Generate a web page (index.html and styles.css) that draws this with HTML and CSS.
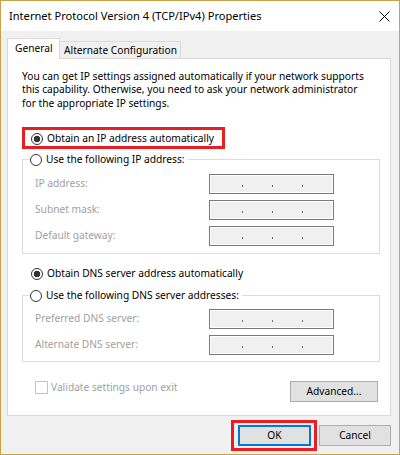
FILE: index.html
```html
<!DOCTYPE html>
<html lang="en">
<head>
<meta charset="utf-8">
<title>Internet Protocol Version 4 (TCP/IPv4) Properties</title>
<link rel="stylesheet" href="styles.css">
</head>
<body>
<div class="window">
  <div class="titlebar">
    <span class="title">Internet Protocol Version 4 (TCP/IPv4) Properties</span>
    <svg class="close" width="11" height="11" viewBox="0 0 11 11"><path d="M0.5 0.5L10.5 10.5M10.5 0.5L0.5 10.5" stroke="#000" stroke-width="1" fill="none"/></svg>
  </div>
  <div class="content">
    <div class="tabs">
      <div class="tab tab-active">General</div>
      <div class="tab tab-other">Alternate Configuration</div>
    </div>
    <div class="panel">
      <p class="intro">You can get IP settings assigned automatically if your network supports<br>this capability. Otherwise, you need to ask your network administrator<br>for the appropriate IP settings.</p>

      <div class="highlight">
        <span class="radio checked"></span><span>Obtain an IP address automatically</span>
      </div>

      <fieldset class="group group-ip">
        <legend class="option"><span class="radio"></span><span>Use the following IP address:</span></legend>
        <div class="field"><span class="label">IP address:</span><span class="ipbox"><i></i><i></i><i></i></span></div>
        <div class="field"><span class="label">Subnet mask:</span><span class="ipbox"><i></i><i></i><i></i></span></div>
        <div class="field"><span class="label">Default gateway:</span><span class="ipbox"><i></i><i></i><i></i></span></div>
      </fieldset>

      <div class="option option-row"><span class="radio checked"></span><span>Obtain DNS server address automatically</span></div>

      <fieldset class="group group-dns">
        <legend class="option"><span class="radio"></span><span>Use the following DNS server addresses:</span></legend>
        <div class="field"><span class="label">Preferred DNS server:</span><span class="ipbox"><i></i><i></i><i></i></span></div>
        <div class="field"><span class="label">Alternate DNS server:</span><span class="ipbox"><i></i><i></i><i></i></span></div>
      </fieldset>

      <div class="panel-footer">
        <div class="check"><span class="checkbox"></span><span>Validate settings upon exit</span></div>
        <div class="button button-advanced">Advanced...</div>
      </div>
    </div>
    <div class="footer">
      <div class="ok-highlight"><div class="button button-ok">OK</div></div>
      <div class="button button-cancel">Cancel</div>
    </div>
  </div>
</div>
</body>
</html>
```

FILE: styles.css
```css
* { box-sizing: border-box; }
html, body { margin: 0; padding: 0; }
body {
  font-family: "Noto Sans", "Segoe UI", sans-serif;
  font-size: 10.2px;
  line-height: 13px;
  color: #000;
  background: #fff;
}
.window {
  width: 400px;
  height: 455px;
  border: 1px solid #c8a245;
  background: #f0f0f0;
  display: flex;
  flex-direction: column;
  overflow: hidden;
}
.titlebar {
  height: 30px;
  flex: none;
  background: #fff;
  display: flex;
  align-items: center;
  justify-content: space-between;
  padding: 0 9px 0 8px;
}
.title { font-size: 11.1px; line-height: 16px; }
.close { display: block; }

.content { padding: 7px 8px 0 6px; }

.tabs { display: flex; align-items: flex-end; height: 20px; }
.tab {
  display: flex;
  align-items: center;
  border: 1px solid #d9d9d9;
  border-bottom: 0;
  white-space: nowrap;
}
.tab-active {
  height: 21px;
  width: 53px;
  margin-bottom: -1px;
  background: #fff;
  padding: 0 0 2px 7px;
  position: relative;
  z-index: 1;
}
.tab-other {
  height: 17px;
  width: 121px;
  border-left: 0;
  padding: 0 0 0 4px;
  background: #f0f0f0;
}

.panel {
  height: 358px;
  background: #fff;
  border: 1px solid #d9d9d9;
  padding-top: 11px;
}
.intro { margin: 0 0 0 14px; line-height: 13.3px; }

.radio {
  flex: none;
  width: 12px;
  height: 12px;
  border: 1px solid #333;
  border-radius: 50%;
  background: #fff;
}
.radio.checked { background: radial-gradient(circle, #333 0 3px, #fff 3.6px); }

.highlight {
  margin: 17px 0 0 14px;
  width: 203px;
  height: 22px;
  border: 3px solid #ec1c24;
  padding: 2px 0 0 6px;
  display: flex;
  align-items: center;
  gap: 4px;
  white-space: nowrap;
}

.option { display: flex; align-items: center; gap: 4px; height: 14px; white-space: nowrap; }

.group {
  width: 358px;
  margin: 4px 0 0 14px;
  border: 1px solid #dcdcdc;
  padding: 7px 0 7px 0;
  min-inline-size: 0;
}
.group legend { margin-left: 7px; padding: 0 3px 0 0; }
.group-dns { margin-top: 8px; padding: 6px 0 6px 0; }

.field {
  display: flex;
  align-items: center;
  height: 20px;
  margin-left: 12px;
}
.field + .field { margin-top: 6px; }
.label { width: 174px; color: #a0a0a0; }
.ipbox {
  width: 125px;
  height: 20px;
  border: 1px solid #7a7a7a;
  box-shadow: inset 0 0 0 1px #fff;
  background: #f0f0f0;
  display: flex;
  align-items: center;
  gap: 29px;
  padding: 5px 0 0 32px;
}
.ipbox i { display: block; width: 1px; height: 2px; background: #6e6a8e; }

.option-row { margin: 13px 0 0 23px; }

.panel-footer {
  margin: 19px 12px 0 27px;
  display: flex;
  justify-content: space-between;
  align-items: flex-start;
}
.check { display: flex; align-items: center; gap: 3px; height: 13px; color: #a0a0a0; white-space: nowrap; }
.checkbox { width: 13px; height: 13px; border: 1px solid #c4c4c4; background: #fff; }

.button {
  display: flex;
  align-items: center;
  justify-content: center;
  height: 21px;
  background: #e1e1e1;
  border: 1px solid #adadad;
  white-space: nowrap;
}
.button-advanced { width: 88px; }
.button-ok { width: 73px; border: 2px solid #0078d7; }
.button-cancel { width: 72px; }

.footer {
  margin-top: 4px;
  display: flex;
  justify-content: flex-end;
  align-items: center;
  gap: 2px;
}
.ok-highlight {
  border: 3px solid #ec1c24;
  padding: 2px 3px 2px 4px;
}
```
